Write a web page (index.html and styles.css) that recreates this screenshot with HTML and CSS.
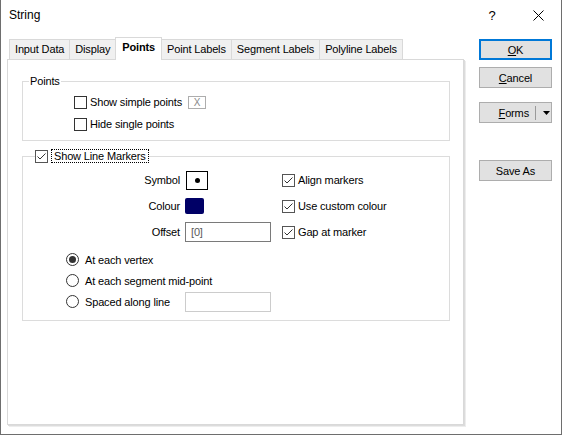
FILE: index.html
```html
<!DOCTYPE html>
<html>
<head>
<meta charset="utf-8">
<title>String</title>
<link rel="stylesheet" href="styles.css">
</head>
<body>
<div class="window">
  <div class="titlebar">
    <span class="title">String</span>
    <span class="tb-btn help">?</span>
    <span class="tb-btn close"><svg width="11" height="11" viewBox="0 0 11 11"><path d="M0.5 0.5 L10.5 10.5 M10.5 0.5 L0.5 10.5" stroke="#000" stroke-width="1" fill="none"/></svg></span>
  </div>
  <div class="main">
    <div class="tabarea">
      <div class="tabs">
        <div class="tab">Input Data</div>
        <div class="tab">Display</div>
        <div class="tab active">Points</div>
        <div class="tab">Point Labels</div>
        <div class="tab">Segment Labels</div>
        <div class="tab">Polyline Labels</div>
      </div>
      <div class="panel">
        <fieldset class="group group-points">
          <legend class="legend-text">Points</legend>
          <div class="row">
            <span class="cb"></span><span class="lbl">Show simple points</span><span class="xbtn">X</span>
          </div>
          <div class="row">
            <span class="cb"></span><span class="lbl">Hide single points</span>
          </div>
        </fieldset>
        <fieldset class="group group-markers">
          <legend class="legend-check">
            <span class="cb checked"><svg width="11" height="11" viewBox="0 0 11 11"><path d="M1.5 5.5 L4 8 L9.5 2.5" stroke="#333" stroke-width="1" fill="none"/></svg></span><span class="focus">Show Line Markers</span>
          </legend>
          <div class="marker-grid">
            <span class="flabel">Symbol</span>
            <span class="symbol-box"><span class="dot"></span></span>
            <span class="check"><span class="cb checked"><svg width="11" height="11" viewBox="0 0 11 11"><path d="M1.5 5.5 L4 8 L9.5 2.5" stroke="#333" stroke-width="1" fill="none"/></svg></span><span class="lbl">Align markers</span></span>

            <span class="flabel">Colour</span>
            <span class="swatch"></span>
            <span class="check"><span class="cb checked"><svg width="11" height="11" viewBox="0 0 11 11"><path d="M1.5 5.5 L4 8 L9.5 2.5" stroke="#333" stroke-width="1" fill="none"/></svg></span><span class="lbl">Use custom colour</span></span>

            <span class="flabel">Offset</span>
            <span class="input">[0]</span>
            <span class="check"><span class="cb checked"><svg width="11" height="11" viewBox="0 0 11 11"><path d="M1.5 5.5 L4 8 L9.5 2.5" stroke="#333" stroke-width="1" fill="none"/></svg></span><span class="lbl">Gap at marker</span></span>
          </div>
          <div class="radios">
            <div class="radio-row">
              <span class="radio-item"><svg class="rb" width="13" height="13" viewBox="0 0 13 13"><circle cx="6.5" cy="6.5" r="6" fill="#fff" stroke="#333" stroke-width="1"/><circle cx="6.5" cy="6.5" r="3.5" fill="#333"/></svg><span class="lbl">At each vertex</span></span>
            </div>
            <div class="radio-row">
              <span class="radio-item"><svg class="rb" width="13" height="13" viewBox="0 0 13 13"><circle cx="6.5" cy="6.5" r="6" fill="#fff" stroke="#333" stroke-width="1"/></svg><span class="lbl">At each segment mid-point</span></span>
            </div>
            <div class="radio-row">
              <span class="radio-item fixed"><svg class="rb" width="13" height="13" viewBox="0 0 13 13"><circle cx="6.5" cy="6.5" r="6" fill="#fff" stroke="#333" stroke-width="1"/></svg><span class="lbl">Spaced along line</span></span>
              <span class="input disabled"></span>
            </div>
          </div>
        </fieldset>
      </div>
    </div>
    <div class="buttons">
      <div class="btn default"><span><u>O</u>K</span></div>
      <div class="btn cancel"><span><u>C</u>ancel</span></div>
      <div class="btn forms"><span><u>F</u>orms</span><span class="sep"></span><svg width="7" height="4" viewBox="0 0 7 4"><path d="M0 0 H7 L3.5 4 Z" fill="#000"/></svg></div>
      <div class="btn saveas"><span>Save As</span></div>
    </div>
  </div>
</div>
</body>
</html>
```

FILE: styles.css
```css
* {
  box-sizing: border-box;
}

html,
body {
  margin: 0;
  padding: 0;
  background: #ffffff;
}

body {
  font-family: "Liberation Sans", Arial, sans-serif;
  font-size: 11px;
  letter-spacing: -0.15px;
  color: #000000;
}

.window {
  width: 562px;
  height: 435px;
  border: 1px solid #6e6e6e;
  border-top: none;
  background: #ffffff;
  overflow: hidden;
}

/* Title bar */
.titlebar {
  height: 30px;
  display: flex;
  align-items: center;
  padding-left: 8px;
  font-size: 12px;
  letter-spacing: 0;
}

.title {
  flex: 1;
}

.tb-btn {
  width: 46px;
  height: 30px;
  display: flex;
  align-items: center;
  justify-content: center;
}

.help {
  font-size: 13px;
}

/* Main area */
.main {
  display: flex;
  padding: 7px 0 0 6px;
  gap: 15px;
}

.tabarea {
  width: 457px;
}

.tabs {
  display: flex;
  align-items: flex-end;
  height: 22px;
  padding-left: 2px;
}

.tab {
  height: 20px;
  border: 1px solid #d9d9d9;
  border-bottom: none;
  background: #f0f0f0;
  padding: 0 5px;
  line-height: 18px;
  margin-left: -1px;
  white-space: nowrap;
}

.tab:first-child {
  margin-left: 0;
}

.tab.active {
  height: 23px;
  margin-bottom: -1px;
  background: #ffffff;
  font-weight: bold;
  line-height: 19px;
  position: relative;
  z-index: 1;
  padding: 0 6px;
}

.panel {
  width: 457px;
  height: 366px;
  border: 1px solid #d9d9d9;
  box-shadow: 1px 1px 0 #dcdcdc, 2px 2px 0 #ededed;
  padding: 0 13px 0 14px;
  background: #ffffff;
}

/* Group boxes */
.group {
  margin: 0;
  padding: 0;
  border: 1px solid #dcdcdc;
  min-width: 0;
}

.group legend {
  line-height: 14px;
  height: 14px;
}

.legend-text {
  padding: 0 1px;
  margin-left: 6px;
}

.group-points {
  margin-top: 14px;
  padding: 3px 0 5px 0;
}

.group-points .row {
  padding-left: 51px;
}

.group-markers {
  margin-top: 8px;
  padding: 4px 0 8px 0;
}

.legend-check {
  margin-left: 12px;
  padding: 0;
  display: flex;
  align-items: center;
}

.focus {
  margin-left: 3px;
  height: 14px;
  line-height: 12px;
  padding: 0 2px 0 2px;
  outline: 1px dotted #000;
  outline-offset: -1px;
  border: 1px solid transparent;
}

.row {
  height: 22px;
  display: flex;
  align-items: center;
}

/* Checkbox */
.cb {
  width: 13px;
  height: 13px;
  border: 1px solid #333333;
  background: #ffffff;
  display: inline-flex;
  align-items: center;
  justify-content: center;
  flex: none;
}

.cb.checked {
  border-color: #555555;
}

.lbl {
  margin-left: 3px;
  white-space: nowrap;
}

.xbtn {
  margin-left: 6px;
  width: 18px;
  height: 13px;
  border: 1px solid #adadad;
  color: #8a8a8a;
  font-size: 10px;
  display: inline-flex;
  align-items: center;
  justify-content: center;
}

/* Marker grid */
.marker-grid {
  display: grid;
  grid-template-columns: 157px 92px auto;
  grid-auto-rows: 26px;
  column-gap: 5px;
  align-items: center;
}

.flabel {
  text-align: right;
}

.check {
  display: flex;
  align-items: center;
}

.symbol-box {
  margin-left: 1px;
  width: 22px;
  height: 19px;
  border: 1px solid #000000;
  display: flex;
  align-items: center;
  justify-content: center;
}

.dot {
  width: 5px;
  height: 5px;
  border-radius: 50%;
  background: #000000;
}

.swatch {
  width: 19px;
  height: 16px;
  background: #000066;
  border-radius: 2px;
}

.input {
  width: 86px;
  height: 20px;
  border: 1px solid #7a7a7a;
  padding-left: 5px;
  line-height: 18px;
  color: #595959;
  display: block;
}

.input.disabled {
  border-color: #cccccc;
}

/* Radios */
.radios {
  margin-top: 4px;
}

.radio-row {
  height: 21px;
  display: flex;
  align-items: center;
  padding-left: 43px;
}

.radio-item {
  display: flex;
  align-items: center;
}

.radio-item.fixed {
  width: 119px;
}

.rb {
  flex: none;
}

.radio-item .lbl {
  margin-left: 6px;
}

/* Buttons */
.buttons {
  display: flex;
  flex-direction: column;
  padding-top: 2px;
}

.btn {
  width: 73px;
  height: 21px;
  border: 1px solid #adadad;
  background: #e1e1e1;
  display: flex;
  align-items: center;
  justify-content: center;
}

.btn.default {
  border: 2px solid #0078d7;
}

.btn.cancel {
  margin-top: 7px;
}

.btn.forms {
  margin-top: 14px;
  justify-content: flex-end;
  padding-right: 1px;
}

.sep {
  width: 1px;
  height: 14px;
  background: #9a9a9a;
  margin: 0 7px 0 6px;
}

.btn.saveas {
  margin-top: 37px;
}
```
